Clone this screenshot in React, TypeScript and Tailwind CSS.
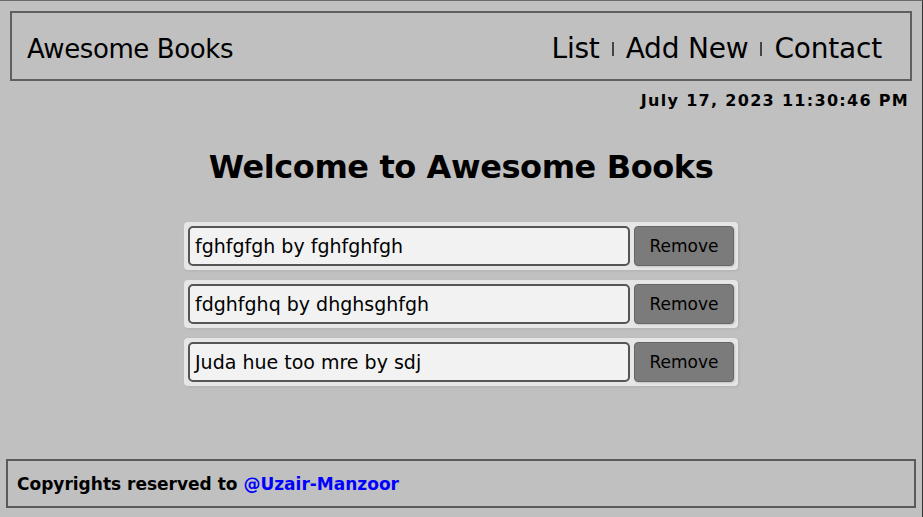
import React from "react";

const books = [
  "fghfgfgh by fghfghfgh",
  "fdghfghq by dhghsghfgh",
  "Juda hue too mre by sdj",
];

export default function App() {
  return (
    <div
      className="h-[517px] w-[923px] bg-[#c0c0c0] border-t border-t-[#6a6a6a] border-r border-r-[#333] flex flex-col text-black overflow-hidden"
      style={{ fontFamily: '"DejaVu Sans", sans-serif' }}
    >
      <header className="mt-[10px] ml-[10px] w-[902px] h-[70px] border-2 border-[#5f5f5f] flex items-center justify-between pl-[15px] pr-[28px] pt-[5px]">
        <h1 className="text-[26px] leading-none tracking-[-0.4px]">Awesome Books</h1>
        <nav className="flex items-center text-[28px] leading-none tracking-[-0.2px]">
          <span>List</span>
          <span className="mx-[12px] w-[2px] h-[14px] bg-[#444]" />
          <span>Add New</span>
          <span className="mx-[12px] w-[2px] h-[14px] bg-[#444]" />
          <span>Contact</span>
        </nav>
      </header>
      <div className="mt-[9px] pr-[13px] text-right text-[16px] font-bold leading-[22px] tracking-[1.3px]">
        July 17, 2023 11:30:46 PM
      </div>
      <h2 className="mt-[35px] text-center text-[32px] font-bold leading-[40px] tracking-[-0.4px]">
        Welcome to Awesome Books
      </h2>
      <ul className="mt-[35px] flex flex-col gap-[10px] items-center">
        {books.map((b) => (
          <li
            key={b}
            className="w-[554px] h-[48px] bg-[#e6e6e6] rounded-[4px] p-[4px] flex gap-[4px] shadow-[1px_1px_3px_rgba(0,0,0,0.08)]"
          >
            <div className="w-[442px] h-[40px] bg-[#f2f2f2] border-2 border-[#555] rounded-[5px] flex items-center pl-[5px] text-[19px] leading-none">
              {b}
            </div>
            <button className="w-[100px] h-[40px] bg-[#7b7b7b] border border-[#666] rounded-[4px] text-[17px] leading-none text-black shadow-[1px_1px_2px_rgba(0,0,0,0.15)]">
              Remove
            </button>
          </li>
        ))}
      </ul>
      <footer className="mt-auto mb-[9px] ml-[6px] w-[910px] h-[49px] border-2 border-[#5a5a5a] flex items-center pl-[9px] pt-[2px] text-[17px] font-bold leading-none">
        <span>Copyrights reserved to&nbsp;</span>
        <a className="text-[#0000ff]">@Uzair-Manzoor</a>
      </footer>
    </div>
  );
}
